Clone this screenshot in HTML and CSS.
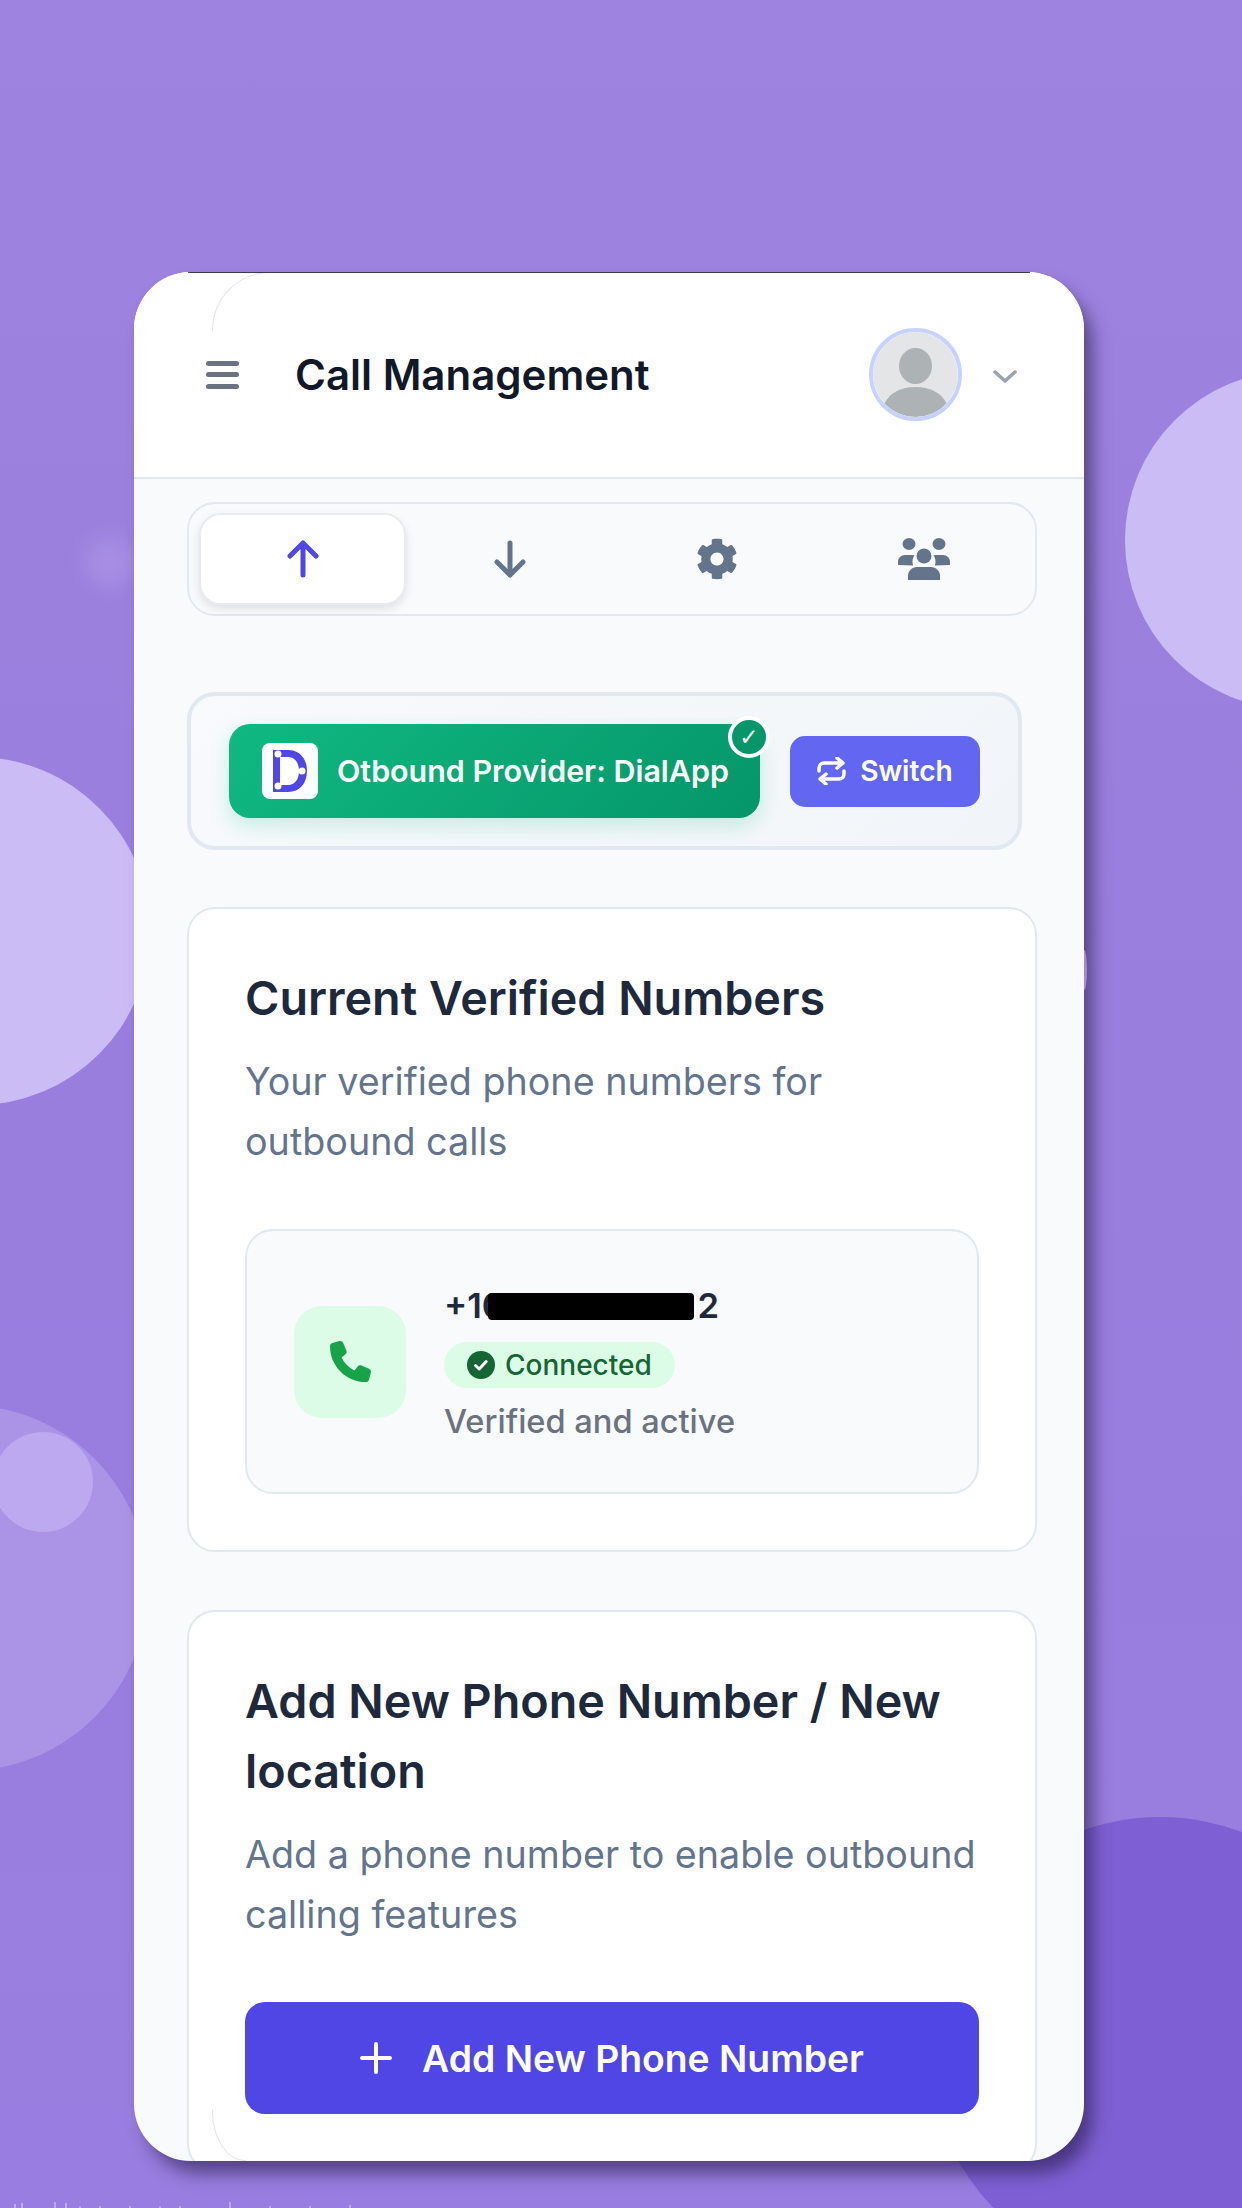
FILE: index.html
```html
<!DOCTYPE html>
<html>
<head>
  <meta charset="UTF-8">
  <title>Call Management</title>
  <link rel="stylesheet" href="styles.css">
</head>
<body>
  <div class="page">
    <div class="blob blob-top-right"></div>
    <div class="blob blob-left"></div>
    <div class="blob blob-low-left"></div>
    <div class="blob blob-low-small"></div>
    <div class="blob blob-glow"></div>
    <div class="blob blob-bottom"></div>

    <main class="panel">
      <header class="topbar">
        <button class="menu-btn" aria-label="Menu"><span></span><span></span><span></span></button>
        <h1>Call Management</h1>
        <div class="avatar">
          <svg viewBox="0 0 85 85" width="85" height="85">
            <circle cx="42.5" cy="42.5" r="42.5" fill="#e3e5e7"/>
            <ellipse cx="42.5" cy="34" rx="16.5" ry="18" fill="#adb2b5"/>
            <path d="M11.5 71.5C17 60 29 55 42.500 55S68 60 73.500 71.500C66 80 55 85 42.500 85S19 80 11.500 71.500Z" fill="#adb2b5"/>
          </svg>
        </div>
        <svg class="chevron" viewBox="0 0 24 13" width="24" height="13"><path d="M2 2l10 9L22 2" fill="none" stroke="#9ca3af" stroke-width="3.5" stroke-linecap="round" stroke-linejoin="round"/></svg>
      </header>

      <div class="content">
        <nav class="tabs">
          <div class="tab active">
            <svg viewBox="0 0 32 38" width="32" height="38"><path d="M16 35V3M3 16L16 3l13 13" fill="none" stroke="#4f46e5" stroke-width="5" stroke-linecap="round" stroke-linejoin="round"/></svg>
          </div>
          <div class="tab">
            <svg viewBox="0 0 32 38" width="32" height="38"><path d="M16 3v32M3 22l13 13 13-13" fill="none" stroke="#64748b" stroke-width="5" stroke-linecap="round" stroke-linejoin="round"/></svg>
          </div>
          <div class="tab">
            <svg viewBox="0 0 512 512" width="42" height="42"><path fill="#64748b" d="M487.4 315.700l-42.600-24.600c4.300-23.200 4.300-47 0-70.200l42.600-24.600c4.900-2.800 7.100-8.600 5.500-14-11.100-35.600-30-67.800-54.700-94.600-3.800-4.100-10-5.100-14.800-2.300L380.800 110c-17.900-15.400-38.500-27.300-60.800-35.100V25.800c0-5.600-3.900-10.500-9.400-11.700-36.700-8.200-74.300-7.800-109.200 0-5.500 1.200-9.400 6.100-9.400 11.700V75c-22.200 7.900-42.800 19.800-60.800 35.100L88.700 85.500c-4.900-2.800-11-1.900-14.800 2.300-24.700 26.700-43.600 58.900-54.700 94.600-1.700 5.400.6 11.200 5.500 14L67.300 221c-4.300 23.200-4.300 47 0 70.200l-42.600 24.600c-4.900 2.800-7.100 8.600-5.500 14 11.100 35.600 30 67.800 54.700 94.600 3.800 4.100 10 5.100 14.800 2.300l42.600-24.600c17.900 15.400 38.500 27.300 60.800 35.100v49.200c0 5.600 3.900 10.500 9.400 11.700 36.700 8.200 74.300 7.800 109.200 0 5.500-1.200 9.400-6.100 9.400-11.700v-49.200c22.200-7.900 42.800-19.800 60.800-35.100l42.600 24.600c4.900 2.800 11 1.900 14.800-2.300 24.700-26.700 43.600-58.900 54.700-94.600 1.500-5.500-.7-11.300-5.600-14.100zM256 336c-44.100 0-80-35.900-80-80s35.900-80 80-80 80 35.900 80 80-35.900 80-80 80z"/></svg>
          </div>
          <div class="tab">
            <svg viewBox="0 0 52 42" width="52" height="42" fill="#64748b">
              <ellipse cx="11" cy="6" rx="6.500" ry="6"/>
              <ellipse cx="41" cy="6" rx="6.500" ry="6"/>
              <ellipse cx="26" cy="18" rx="7.500" ry="7.500"/>
              <path d="M0 27v-3c0-4 3-7 7-7h7c1 0 2 .2 2.500.5-1.500 2-2 3.500-2 6.500 0 1 .2 2.300.6 3.500Z"/>
              <path d="M52 27v-3c0-4-3-7-7-7h-7c-1 0-2 .2-2.500.5 1.500 2 2 3.500 2 6.500 0 1-.2 2.300-.6 3.500Z"/>
              <path d="M10 42v-4c0-5 4-9 9-9h14c5 0 9 4 9 9v4Z"/>
            </svg>
          </div>
        </nav>

        <section class="provider">
          <div class="provider-badge">
            <svg class="provider-logo" viewBox="0 0 56 56" width="56" height="56">
              <path fill="#4f46e5" fill-rule="evenodd" d="M11 7h15c12 0 19 9 19 21s-7 21-19 21H11ZM18 14v28h8c7 0 11-6 11-14s-4-14-11-14Z"/>
              <circle cx="16" cy="11" r="3.500" fill="#fff"/>
              <circle cx="16" cy="43" r="3.500" fill="#fff"/>
              <circle cx="40" cy="28" r="3.500" fill="#fff"/>
            </svg>
            <span>Otbound Provider: DialApp</span>
            <span class="verified-tick">✓</span>
          </div>
          <button class="switch-btn">
            <svg viewBox="0 0 29 28" width="29" height="28"><path d="M2 14v-3a5 5 0 0 1 5-5h19M20 1l6 5-6 5M27 14v3a5 5 0 0 1-5 5H3M9 17l-6 5 6 5" fill="none" stroke="#fff" stroke-width="3.500" stroke-linecap="round" stroke-linejoin="round"/></svg>
            Switch
          </button>
        </section>

        <section class="card">
          <h2>Current Verified Numbers</h2>
          <p class="card-text">Your verified phone numbers for outbound calls</p>
          <div class="number-row">
            <div class="number-icon">
              <svg viewBox="0 0 512 512" width="41" height="41"><path fill="#16a34a" d="M164.900 24.600c-7.700-18.600-28-28.500-47.400-23.200l-88 24C12.100 30.200 0 46 0 64C0 311.400 200.600 512 448 512c18 0 33.800-12.100 38.600-29.500l24-88c5.300-19.400-4.600-39.700-23.200-47.400l-96-40c-16.300-6.800-35.200-2.100-46.300 11.600L304.700 368C234.300 334.700 177.300 277.700 144 207.300L193.300 167c13.700-11.200 18.400-30 11.600-46.300l-40-96z"/></svg>
            </div>
            <div class="number-info">
              <div class="number-value">+10<span class="redacted"></span>2</div>
              <div class="status-pill">
                <svg viewBox="0 0 28 28" width="28" height="28"><circle cx="14" cy="14" r="14" fill="#166534"/><path d="M8.500 14.500l3.700 3.500 7-7.500" fill="none" stroke="#fff" stroke-width="3" stroke-linecap="round" stroke-linejoin="round"/></svg>
                Connected
              </div>
              <div class="number-note">Verified and active</div>
            </div>
          </div>
        </section>

        <section class="card">
          <h2>Add New Phone Number / New location</h2>
          <p class="card-text">Add a phone number to enable outbound calling features</p>
          <button class="add-btn">
            <svg viewBox="0 0 32 32" width="32" height="32"><path d="M16 2v28M2 16h28" fill="none" stroke="#fff" stroke-width="4" stroke-linecap="round"/></svg>
            Add New Phone Number
          </button>
        </section>
      </div>
    </main>

    <div class="peek"></div>
    <svg class="cut-text" viewBox="0 0 400 8" width="400" height="8">
      <path d="M15 8V4M22 8V3M55 8V2M66 8V3M80 8V6M100 8V6M130 8V6M160 8V6M180 8V6M230 8V2M270 8V6M310 8V6M350 8V5" stroke="#fff" stroke-opacity=".35" stroke-width="2" fill="none"/>
    </svg>
  </div>
</body>
</html>
```

FILE: styles.css
```css
* {
  box-sizing: border-box;
}

body {
  margin: 0;
  font-family: Inter, "Liberation Sans", sans-serif;
}

.page {
  position: relative;
  width: 1242px;
  height: 2208px;
  overflow: hidden;
  padding: 272px 0 0 134px;
  background: linear-gradient(180deg, #9e83e0 0%, #9a7edd 45%, #997de0 100%);
}

.blob {
  position: absolute;
  border-radius: 50%;
}

.blob-top-right {
  left: 1125px;
  top: 371px;
  width: 338px;
  height: 338px;
  background: #cbbcf5;
}

.blob-left {
  left: -198px;
  top: 757px;
  width: 348px;
  height: 348px;
  background: #cbbcf5;
}

.blob-low-left {
  left: -218px;
  top: 1405px;
  width: 366px;
  height: 366px;
  background: #ab93e6;
}

.blob-low-small {
  left: -7px;
  top: 1432px;
  width: 100px;
  height: 100px;
  background: #bda9ef;
}

.blob-glow {
  left: 85px;
  top: 537px;
  width: 50px;
  height: 50px;
  background: #a78ee3;
  filter: blur(10px);
}

.blob-bottom {
  left: 929px;
  top: 1817px;
  width: 462px;
  height: 462px;
  background: #7f60d4;
}

.panel {
  position: relative;
  width: 950px;
  height: 1889px;
  overflow: hidden;
  border-radius: 57px;
  background: #f8fafc;
  box-shadow: 10px 14px 18px -2px rgba(35, 25, 70, 0.6);
}

/* leftover arcs and top hairline */
.panel::before {
  content: "";
  position: absolute;
  left: 78px;
  top: 0;
  width: 58px;
  height: 58px;
  border-top: 1px solid #e2e3f0;
  border-left: 1px solid #e2e3f0;
  border-top-left-radius: 58px;
}

.panel::after {
  content: "";
  position: absolute;
  left: 54px;
  right: 54px;
  top: 0;
  height: 1px;
  background: #3d3a50;
}

.content::after {
  content: "";
  position: absolute;
  left: 78px;
  bottom: 0;
  width: 33px;
  height: 50px;
  border-bottom: 1px solid #e2e3f0;
  border-left: 1px solid #e2e3f0;
  border-bottom-left-radius: 33px 50px;
}

.topbar {
  display: flex;
  align-items: center;
  height: 207px;
  padding: 0 67px 0 72px;
  background: #fff;
  border-bottom: 2px solid #e2e8f0;
}

.menu-btn {
  display: flex;
  flex-direction: column;
  justify-content: space-between;
  width: 33px;
  height: 28px;
  padding: 0;
  border: none;
  background: none;
}

.menu-btn span {
  height: 5px;
  border-radius: 3px;
  background: #6b7280;
}

.topbar h1 {
  flex: 1;
  margin: 0 0 0 56px;
  font-size: 42px;
  font-weight: 600;
  color: #111827;
}

.avatar {
  width: 93px;
  height: 93px;
  border: 4px solid #c7d2fe;
  border-radius: 50%;
  overflow: hidden;
}

.avatar svg {
  display: block;
}

.chevron {
  margin: 3px 0 0 31px;
}

.content {
  padding: 23px 47px 0 53px;
}

.tabs {
  display: grid;
  grid-template-columns: repeat(4, 1fr);
  height: 114px;
  padding: 9px 8px 9px 10px;
  border: 2px solid #e2e8f0;
  border-radius: 28px;
  background: #f8fafc;
}

.tab {
  display: flex;
  align-items: center;
  justify-content: center;
  border-radius: 22px;
}

.tab.active {
  background: #fff;
  border: 2px solid #e8ebf1;
  box-shadow: 0 4px 10px rgba(0, 0, 0, 0.1);
}

.provider {
  display: flex;
  align-items: center;
  justify-content: space-between;
  width: 835px;
  height: 158px;
  margin-top: 76px;
  padding: 0 38px;
  border: 4px solid #e2e8f0;
  border-radius: 28px;
  background: linear-gradient(135deg, #f8fafc, #f1f5f9);
}

.provider-badge {
  position: relative;
  display: flex;
  align-items: center;
  gap: 19px;
  width: 531px;
  height: 94px;
  padding-left: 33px;
  border-radius: 21px;
  background: linear-gradient(135deg, #10b981, #059669);
  box-shadow: 0 8px 20px rgba(16, 185, 129, 0.2);
  color: #fff;
  font-size: 30.4px;
  font-weight: 600;
}

.provider-logo {
  border-radius: 8px;
  background: #fff;
}

.verified-tick {
  position: absolute;
  right: -10px;
  top: -8px;
  width: 42px;
  height: 42px;
  border: 4px solid #fff;
  border-radius: 50%;
  background: #059669;
  font: 400 23px/34px "DejaVu Sans", sans-serif;
  text-align: center;
}

.switch-btn {
  display: flex;
  align-items: center;
  justify-content: center;
  gap: 14px;
  width: 190px;
  height: 71px;
  padding: 0;
  border: none;
  border-radius: 15px;
  background: #6366f1;
  color: #fff;
  font: 600 28.2px Inter, sans-serif;
}

.card {
  margin-top: 58px;
  padding: 54px 56px 56px;
  border: 2px solid #e2e8f0;
  border-radius: 28px;
  background: #fff;
}

.provider + .card {
  margin-top: 57px;
}

.card h2 {
  margin: 0;
  font-size: 46.7px;
  line-height: 70px;
  font-weight: 600;
  color: #1e293b;
}

.card-text {
  margin: 18px 0 0;
  font-size: 37.7px;
  line-height: 60px;
  color: #64748b;
}

.number-row {
  display: flex;
  align-items: center;
  gap: 38px;
  height: 265px;
  margin-top: 58px;
  padding-left: 47px;
  border: 2px solid #e2e8f0;
  border-radius: 28px;
  background: #f8fafc;
}

.number-icon {
  display: flex;
  align-items: center;
  justify-content: center;
  width: 112px;
  height: 112px;
  border-radius: 28px;
  background: #dcfce7;
}

.number-info {
  padding-top: 7px;
}

.number-value {
  display: flex;
  align-items: center;
  font-size: 34.5px;
  font-weight: 600;
  line-height: 44px;
  color: #1e293b;
}

.redacted {
  width: 206px;
  height: 27px;
  margin-left: -17px;
  margin-right: 4px;
  border-radius: 4px;
  background: #000;
}

.status-pill {
  display: flex;
  align-items: center;
  gap: 10px;
  width: 231px;
  height: 46px;
  margin-top: 14px;
  padding-left: 23px;
  border-radius: 23px;
  background: #dcfce7;
  color: #166534;
  font-size: 28px;
  font-weight: 500;
}

.number-note {
  margin-top: 8px;
  font-size: 32.6px;
  font-weight: 500;
  line-height: 50px;
  color: #6b7280;
}

.add-btn {
  display: flex;
  align-items: center;
  justify-content: center;
  gap: 30px;
  width: 100%;
  height: 112px;
  margin-top: 58px;
  padding: 0;
  border: none;
  border-radius: 20px;
  background: #4f46e5;
  color: #fff;
  font: 600 37.3px Inter, sans-serif;
}

.peek {
  position: absolute;
  left: 1084px;
  top: 950px;
  width: 3px;
  height: 40px;
  border-radius: 0 100% 100% 0 / 0 50% 50% 0;
  background: #a48bd0;
}

.cut-text {
  position: absolute;
  left: 0;
  top: 2200px;
}
```
